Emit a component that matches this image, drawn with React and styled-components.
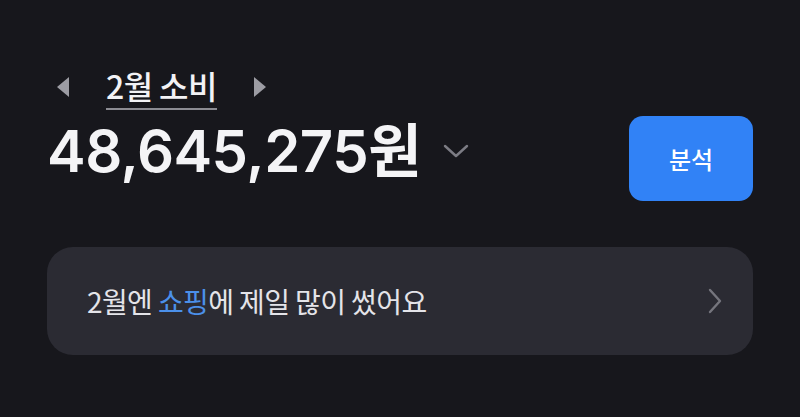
import React from "react";
import styled, { createGlobalStyle } from "styled-components";

const Global = createGlobalStyle`
  html, body { margin: 0; padding: 0; background: #17171c; }
  body { font-family: "Noto Sans CJK KR", "Noto Sans", sans-serif; }
`;

const Page = styled.div`
  width: 800px;
  height: 417px;
  background: #17171c;
  box-sizing: border-box;
  padding: 64px 47px 0 47px;
  display: flex;
  flex-direction: column;
`;

const TopRow = styled.div`
  display: flex;
  justify-content: space-between;
  align-items: flex-start;
`;

const LeftCol = styled.div`
  display: flex;
  flex-direction: column;
`;

const MonthNav = styled.div`
  display: flex;
  align-items: center;
  gap: 35px;
  padding-left: 8px;
`;

const Arrow = styled.svg`
  width: 16px;
  height: 22px;
  display: block;
`;

const MonthTitle = styled.div`
  color: #f2f2f5;
  font-size: 32px;
  font-weight: 500;
  line-height: 42px;
  letter-spacing: -0.6px;
  border-bottom: 2px solid #8b8b92;
  padding: 0 0 2px 0;
`;

const AmountRow = styled.div`
  display: flex;
  align-items: center;
  gap: 22px;
  margin-top: -1px;
`;

const Amount = styled.div`
  color: #f4f4f6;
  font-family: "Inter", "Noto Sans CJK KR", sans-serif;
  font-size: 58px;
  font-weight: 600;
  letter-spacing: -0.5px;
  line-height: 84px;
`;

const AnalyzeButton = styled.button`
  margin-top: 52px;
  width: 124px;
  height: 85px;
  border: none;
  border-radius: 14px;
  background: #3182f6;
  color: #ffffff;
  font-family: "Noto Sans CJK KR", sans-serif;
  font-size: 24px;
  font-weight: 500;
`;

const Card = styled.div`
  margin-top: 46px;
  height: 108px;
  border-radius: 26px;
  background: #2b2b33;
  display: flex;
  align-items: center;
  justify-content: space-between;
  padding: 0 30px 0 40px;
`;

const CardText = styled.div`
  color: #e4e4e9;
  font-size: 28px;
  font-weight: 400;
  letter-spacing: -0.6px;
`;

const Highlight = styled.span`
  color: #4b90ea;
`;

export default function App() {
  return (
    <>
      <Global />
      <Page>
        <TopRow>
          <LeftCol>
            <MonthNav>
              <Arrow viewBox="0 0 16 22">
                <path d="M14 1 L2 11 L14 21 Z" fill="#9c9ca3" />
              </Arrow>
              <MonthTitle>2월 소비</MonthTitle>
              <Arrow viewBox="0 0 16 22">
                <path d="M2 1 L14 11 L2 21 Z" fill="#9c9ca3" />
              </Arrow>
            </MonthNav>
            <AmountRow>
              <Amount>48,645,275원</Amount>
              <svg width="26" height="16" viewBox="0 0 26 16">
                <path d="M2 3 L13 13 L24 3" fill="none" stroke="#7c7c84" strokeWidth="2.4" strokeLinecap="round" strokeLinejoin="round" />
              </svg>
            </AmountRow>
          </LeftCol>
          <AnalyzeButton>분석</AnalyzeButton>
        </TopRow>
        <Card>
          <CardText>
            2월엔 <Highlight>쇼핑</Highlight>에 제일 많이 썼어요
          </CardText>
          <svg width="16" height="26" viewBox="0 0 16 26">
            <path d="M3 2 L13 13 L3 24" fill="none" stroke="#75757d" strokeWidth="2.4" strokeLinecap="round" strokeLinejoin="round" />
          </svg>
        </Card>
      </Page>
    </>
  );
}
